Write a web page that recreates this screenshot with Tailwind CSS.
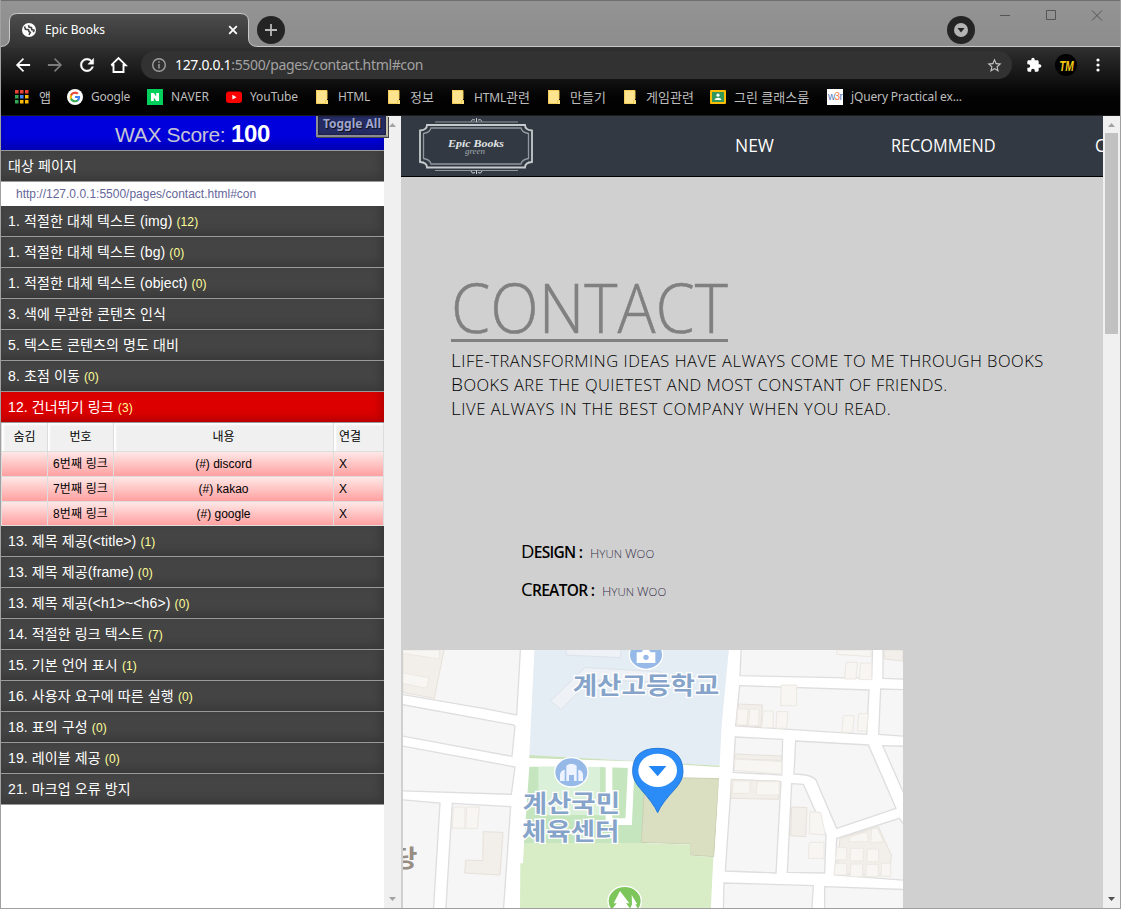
<!DOCTYPE html>
<html lang="ko">
<head>
<meta charset="utf-8">
<title>Epic Books</title>
<script src="https://cdn.jsdelivr.net/npm/@tailwindcss/browser@4"></script>
</head>
<body class="w-[1121px] h-[909px] overflow-hidden bg-[#a5a5a5] font-['Noto_Sans','Noto_Sans_CJK_KR',sans-serif]">
<svg class="hidden"><symbol id="folder" viewBox="0 0 12 14"><path d="M.5.500H11V10H12V14H.5Z" fill="#ffe490"/><path d="M0 .5H11V9M.5 0V13.500H9.500V10.500H12V13.500" fill="none" stroke="#f3cf57"/></symbol></svg>
<div class="relative flex flex-col w-[1121px] h-[909px] border-x border-[#a0a0a0] overflow-hidden">

  <!-- tab strip -->
  <header class="flex h-[47px] shrink-0 bg-linear-to-b from-[#949494] to-[#8c8c8c] border-t border-[#6e6e6e]">
    <div class="relative w-[257px] shrink-0">
      <svg class="absolute left-0 top-0" width="257" height="47" viewBox="0 1 257 47">
        <defs><linearGradient id="tab" x1="0" y1="0" x2="0" y2="1"><stop offset="0" stop-color="#4d4d4d"/><stop offset="1" stop-color="#323232"/></linearGradient></defs>
        <path d="M0 46.500 Q8.500 46 8.500 38 V21 Q8.500 13.500 16.500 13.500 H239 Q247.500 13.500 247.500 21 V38 Q247.500 46.500 257 46.500 V48 H0Z" fill="url(#tab)"/>
        <path d="M0 46.500 Q8.500 46 8.500 38 V21 Q8.500 13.500 16.500 13.500 H239 Q247.500 13.500 247.500 21 V38 Q247.500 46.500 257 46.500" fill="none" stroke="#c9c9c9"/>
      </svg>
      <div class="relative flex items-center h-[33px] mt-[12px] pl-[21px] pr-[20px]">
        <svg width="14" height="14" viewBox="0 0 14 14"><circle cx="7" cy="7" r="7" fill="#fff"/><path d="M2.500 3.500 3.500 6.200 6.500 6.800 7 8.500 8.300 9.500 7 11.800M6.500 2.200 7 4 9.500 4.600 9.700 6.600 12 7.200 11.300 9.200" fill="none" stroke="#444" stroke-width="1.600"/></svg>
        <span class="ml-[9px] text-[12px] leading-none text-white whitespace-nowrap tracking-[-.05px]">Epic Books</span>
        <svg class="ml-auto" width="10" height="10" viewBox="0 0 10 10"><path d="M1.200 1.200 8.800 8.800M8.800 1.200 1.200 8.800" stroke="#fff" stroke-width="1.800"/></svg>
      </div>
    </div>
    <div class="flex flex-1 border-b border-[#c9c9c9] pt-[15px] -ml-[1px]">
      <svg width="28" height="28" viewBox="0 0 28 28"><circle cx="14" cy="14" r="14" fill="#242424"/><path d="M8 14H20M14 8V20" stroke="#b9b9b9" stroke-width="1.800"/></svg>
      <svg class="ml-[662px]" width="28" height="28" viewBox="0 0 28 28"><circle cx="14" cy="14" r="14" fill="#242424"/><circle cx="14" cy="14" r="7" fill="#b4b4b4"/><path d="M10.500 12H17.500L14 16.500Z" fill="#222"/></svg>
      <svg class="ml-[24px] -mt-[8px]" width="106" height="14" viewBox="0 0 106 14" fill="none" stroke="#555"><path d="M1 7.500H11M47.500 2.500H56.500V11.500H47.500ZM93 2.500 103 12.500M103 2.500 93 12.500"/></svg>
    </div>
  </header>

  <!-- toolbar and bookmarks -->
  <div class="h-[69px] shrink-0 bg-linear-to-b from-[#303030] via-[#111] via-50% to-[#020202] to-80% border-b border-[#1c1c1c]">
    <div class="flex items-center h-[36px]">
      <svg class="ml-[12px]" width="20" height="20" viewBox="0 0 24 24" fill="#fff"><path d="M20.500 10.900H7.500l5.700-5.700L11.900 3.700 3.500 12l8.400 8.300 1.400-1.500-5.700-5.700H20.500z"/></svg>
      <svg class="ml-[12px]" width="20" height="20" viewBox="0 0 24 24" fill="#7b7b7b"><path d="M3.500 10.900H16.500L10.800 5.200 12.100 3.700 20.500 12l-8.400 8.300-1.400-1.500 5.700-5.700H3.500z"/></svg>
      <svg class="ml-[12px]" width="20" height="20" viewBox="0 0 24 24" fill="#fff" stroke="#fff" stroke-width=".5"><path d="M17.650 6.350C16.200 4.900 14.210 4 12 4c-4.420 0-7.990 3.580-7.990 8s3.570 8 7.990 8c3.730 0 6.840-2.550 7.730-6h-2.080c-.82 2.330-3.040 4-5.650 4-3.310 0-6-2.690-6-6s2.690-6 6-6c1.660 0 3.140.69 4.220 1.780L13 11h7V4l-2.350 2.350z"/></svg>
      <svg class="ml-[12px]" width="20" height="20" viewBox="0 0 20 20" fill="none" stroke="#fff" stroke-width="1.900"><path d="M4.500 9V17H14.500V9M2.300 10.200 9.500 3 16.700 10.200H14.500M2.300 10.200H4.500"/></svg>
      <div class="flex items-center w-[871px] h-[28px] ml-[12px] rounded-full bg-[#323232] pl-[11px] pr-[9px]">
        <svg width="14" height="14" viewBox="0 0 14 14" fill="none" stroke="#a0a0a0" stroke-width="1.400"><circle cx="7" cy="7" r="6.300"/><path d="M7 6V10.500M7 3.300V4.800"/></svg>
        <span class="ml-[9px] text-[14px] leading-none text-[#a2a2a2] whitespace-nowrap tracking-[-.34px]"><span class="text-white">127.0.0.1</span>:5500/pages/contact.html#con</span>
        <svg class="ml-auto" width="17" height="17" viewBox="0 0 24 24" fill="#c2c2c2"><path d="M22 9.240l-7.190-.62L12 2 9.190 8.630 2 9.240l5.460 4.730L5.820 21 12 17.270 18.180 21l-1.630-7.030L22 9.240zM12 15.400l-3.760 2.270 1-4.280-3.320-2.880 4.380-.38L12 6.100l1.710 4.040 4.380.38-3.320 2.880 1 4.280L12 15.400z"/></svg>
      </div>
      <svg class="ml-[14px]" width="16" height="16" viewBox="0 0 24 24" fill="#fff"><path d="M20.500 11H19V7c0-1.100-.9-2-2-2h-4V3.500C13 2.120 11.880 1 10.500 1S8 2.120 8 3.500V5H4c-1.100 0-1.990.9-1.990 2v3.800H3.500c1.490 0 2.700 1.210 2.700 2.700s-1.210 2.700-2.700 2.700H2V20c0 1.100.9 2 2 2h3.800v-1.500c0-1.490 1.210-2.700 2.700-2.700 1.490 0 2.700 1.210 2.700 2.700V22H17c1.100 0 2-.9 2-2v-4h1.500c1.380 0 2.500-1.120 2.500-2.500S21.880 11 20.500 11z"/></svg>
      <div class="flex items-center justify-center w-[22px] h-[22px] ml-[13px] rounded-full bg-black"><span class="text-[15px] leading-none font-bold italic tracking-[-.5px] text-[#f2c814] font-['Liberation_Sans'] scale-x-[.68]">TM</span></div>
      <svg class="ml-[19px]" width="4" height="14" viewBox="0 0 4 14" fill="#fff"><circle cx="2" cy="2" r="1.600"/><circle cx="2" cy="7" r="1.600"/><circle cx="2" cy="12" r="1.600"/></svg>
    </div>
    <nav class="flex items-center h-[28px] pl-[14px] text-[12px] leading-none text-[#bdbdbd] whitespace-nowrap">
      <div class="flex items-center w-[52px]"><svg width="14" height="14" viewBox="0 0 14 14"><path d="M0 0h3.500v3.500H0zM5 0h3.500v3.500H5zM10 0h3.500v3.500H10z" fill="#ea4335"/><path d="M0 5h3.500v3.500H0zM0 10h3.500v3.500H0z" fill="#34a853"/><path d="M5 5h3.500v3.500H5z" fill="#4285f4"/><path d="M10 5h3.500v3.500H10zM5 10h3.500v3.500H5zM10 10h3.500v3.500H10z" fill="#fbbc05"/></svg><span class="ml-[10px] text-[13px]">앱</span></div>
      <div class="flex items-center w-[80px]"><svg width="16" height="16" viewBox="-4.500 -4.500 33 33"><circle cx="12" cy="12" r="16.500" fill="#fff"/><path d="M22.560 12.250c0-.78-.07-1.530-.2-2.250H12v4.260h5.920c-.26 1.370-1.040 2.530-2.210 3.310v2.770h3.570c2.080-1.920 3.280-4.740 3.280-8.090z" fill="#4285f4"/><path d="M12 23c2.970 0 5.460-.98 7.280-2.660l-3.570-2.770c-.98.66-2.230 1.060-3.710 1.060-2.860 0-5.290-1.930-6.160-4.530H2.180v2.840C3.990 20.530 7.700 23 12 23z" fill="#34a853"/><path d="M5.840 14.090c-.22-.66-.35-1.360-.35-2.090s.13-1.430.35-2.090V7.070H2.180C1.430 8.550 1 10.220 1 12s.43 3.450 1.180 4.930l3.660-2.840z" fill="#fbbc05"/><path d="M12 5.380c1.620 0 3.060.56 4.210 1.640l3.150-3.150C17.450 2.090 14.970 1 12 1 7.700 1 3.990 3.470 2.180 7.070l3.660 2.840c.87-2.600 3.300-4.530 6.160-4.530z" fill="#ea4335"/></svg><span class="ml-[8px] tracking-[-.25px]">Google</span></div>
      <div class="flex items-center w-[79px]"><svg width="16" height="16" viewBox="0 0 16 16"><path d="M0 0H16V16H0Z" fill="#03cf5d"/><path d="M4 12V4H6.800L9.200 7.600V4H12V12H9.200L6.800 8.400V12Z" fill="#fff"/></svg><span class="ml-[8px] tracking-[.07px]">NAVER</span></div>
      <div class="flex items-center w-[90px]"><svg width="16" height="16" viewBox="0 0 16 16"><rect y="2.500" width="16" height="11.500" rx="3" fill="#f00"/><path d="M6.400 5.800 10.500 8.200 6.400 10.600Z" fill="#fff"/></svg><span class="ml-[8px] tracking-[-.07px]">YouTube</span></div>
      <div class="flex items-center w-[72px]"><svg width="12" height="14"><use href="#folder"/></svg><span class="ml-[10px] tracking-[-.19px]">HTML</span></div>
      <div class="flex items-center w-[64px]"><svg width="12" height="14"><use href="#folder"/></svg><span class="ml-[10px] text-[13px]">정보</span></div>
      <div class="flex items-center w-[96px]"><svg width="12" height="14"><use href="#folder"/></svg><span class="ml-[10px] tracking-[-.19px]">HTML<span class="text-[13px] tracking-normal">관련</span></span></div>
      <div class="flex items-center w-[76px]"><svg width="12" height="14"><use href="#folder"/></svg><span class="ml-[10px] text-[13px]">만들기</span></div>
      <div class="flex items-center w-[86px]"><svg width="12" height="14"><use href="#folder"/></svg><span class="ml-[10px] text-[13px]">게임관련</span></div>
      <div class="flex items-center w-[117px]"><svg width="16" height="14" viewBox="0 0 16 14"><rect width="16" height="14" rx="1" fill="#fbbc05"/><path d="M2 2H14V12H2Z" fill="#34985b"/><circle cx="8" cy="5.200" r="1.600" fill="#fff"/><path d="M4.500 10Q5 7.700 8 7.700T11.500 10Z" fill="#fff"/></svg><span class="ml-[8px] text-[13px]">그린 클래스룸</span></div>
      <div class="flex items-center"><span class="flex items-center justify-center w-4 h-4 bg-white text-[10px] tracking-[-.7px] text-[#4f79bd] font-['Liberation_Sans']">w<span class="text-[#f07a3c]">3</span>r</span><span class="ml-[8px] tracking-[-.14px]">jQuery Practical ex...</span></div>
    </nav>
  </div>

  <main class="relative flex h-[792px] shrink-0">
    <!-- accessibility report -->
    <aside class="w-[383px] h-full bg-white text-[14px] text-white font-['Liberation_Sans','Noto_Sans_CJK_KR',sans-serif] whitespace-nowrap [&>h2]:h-[31px] [&>h2]:overflow-hidden [&>h2]:pl-[7px] [&>h2]:border-b [&>h2]:border-[#999] [&>h2]:leading-[30px] [&>h2]:tracking-[.12px] [&>h2]:shadow-[inset_-4px_-4px_8px_rgba(0,0,0,.18)] [&_small]:text-[12px] [&_small]:text-[#ffff99]">
      <h1 class="h-[35px] overflow-hidden border-b border-[#999] bg-[#0000dc] shadow-[inset_0_-6px_10px_rgba(0,0,0,.2)] text-center text-[21px] leading-[36px] tracking-[-.32px] text-[#c4c4d4]">WAX Score: <b class="text-[24px] text-white">100</b></h1>
      <h2 class="bg-[#444]">대상 페이지</h2>
      <p class="h-[24px] pl-[15px] text-[12px] leading-[24px] text-[#666699]">http://127.0.0.1:5500/pages/contact.html#con</p>
      <h2 class="bg-[#444]">1. 적절한 대체 텍스트 (img) <small>(12)</small></h2>
      <h2 class="bg-[#444]">1. 적절한 대체 텍스트 (bg) <small>(0)</small></h2>
      <h2 class="bg-[#444]">1. 적절한 대체 텍스트 (object) <small>(0)</small></h2>
      <h2 class="bg-[#444]">3. 색에 무관한 콘텐츠 인식</h2>
      <h2 class="bg-[#444]">5. 텍스트 콘텐츠의 명도 대비</h2>
      <h2 class="bg-[#444]">8. 초점 이동 <small>(0)</small></h2>
      <h2 class="bg-[#dc0000]">12. 건너뛰기 링크 <small>(3)</small></h2>
      <div class="grid grid-cols-[47px_66px_220px_50px] grid-rows-[29px_25px_25px_24px] text-[12px] leading-none text-black [&>div]:flex [&>div]:items-center [&>div]:border-r [&>div]:border-b [&>div]:border-[#ddd]">
        <div class="justify-center bg-[#f0f0f0] shadow-[inset_2px_2px_2px_#fff] border-l">숨김</div>
        <div class="justify-center bg-[#f0f0f0] shadow-[inset_2px_2px_2px_#fff]">번호</div>
        <div class="justify-center bg-[#f0f0f0] shadow-[inset_2px_2px_2px_#fff]">내용</div>
        <div class="pl-[5px] bg-[#f0f0f0] shadow-[inset_2px_2px_2px_#fff]">연결</div>
        <div class="border-l bg-linear-to-b from-[#ffe8e8] to-[#ffa0a0]"></div>
        <div class="justify-center bg-linear-to-b from-[#ffe8e8] to-[#ffa0a0] tracking-[.14px]">6번째 링크</div>
        <div class="justify-center bg-linear-to-b from-[#ffe8e8] to-[#ffa0a0]">(#) discord</div>
        <div class="pl-[5px] bg-linear-to-b from-[#ffe8e8] to-[#ffa0a0]">X</div>
        <div class="border-l bg-linear-to-b from-[#ffe8e8] to-[#ffa0a0]"></div>
        <div class="justify-center bg-linear-to-b from-[#ffe8e8] to-[#ffa0a0] tracking-[.14px]">7번째 링크</div>
        <div class="justify-center bg-linear-to-b from-[#ffe8e8] to-[#ffa0a0]">(#) kakao</div>
        <div class="pl-[5px] bg-linear-to-b from-[#ffe8e8] to-[#ffa0a0]">X</div>
        <div class="border-l bg-linear-to-b from-[#ffe8e8] to-[#ffa0a0]"></div>
        <div class="justify-center bg-linear-to-b from-[#ffe8e8] to-[#ffa0a0] tracking-[.14px]">8번째 링크</div>
        <div class="justify-center bg-linear-to-b from-[#ffe8e8] to-[#ffa0a0]">(#) google</div>
        <div class="pl-[5px] bg-linear-to-b from-[#ffe8e8] to-[#ffa0a0]">X</div>
      </div>
      <h2 class="bg-[#444]">13. 제목 제공(&lt;title&gt;) <small>(1)</small></h2>
      <h2 class="bg-[#444]">13. 제목 제공(frame) <small>(0)</small></h2>
      <h2 class="bg-[#444]">13. 제목 제공(&lt;h1&gt;~&lt;h6&gt;) <small>(0)</small></h2>
      <h2 class="bg-[#444]">14. 적절한 링크 텍스트 <small>(7)</small></h2>
      <h2 class="bg-[#444]">15. 기본 언어 표시 <small>(1)</small></h2>
      <h2 class="bg-[#444]">16. 사용자 요구에 따른 실행 <small>(0)</small></h2>
      <h2 class="bg-[#444]">18. 표의 구성 <small>(0)</small></h2>
      <h2 class="bg-[#444]">19. 레이블 제공 <small>(0)</small></h2>
      <h2 class="bg-[#444]">21. 마크업 오류 방지</h2>
    </aside>
    <div class="flex flex-col items-center justify-between w-[17px] h-full py-[7px] bg-[#f0f0f0]">
      <svg width="7" height="4" viewBox="0 0 7 4" fill="#a3a3a3"><path d="M0 4H7L3.500 0Z"/></svg>
      <svg width="7" height="4" viewBox="0 0 7 4" fill="#a3a3a3"><path d="M0 0H7L3.500 4Z"/></svg>
    </div>
    <button class="absolute left-[315px] top-0 w-[72px] h-[21px] border-2 border-t-0 border-[#8c8c94] border-r-[#c1beaa] bg-[#252c63] shadow-[inset_0_0_2px_#111,1px_1px_0_#444] text-[12px] font-bold leading-none text-[#9fa6d0] [text-shadow:1px_1px_0_#111] pb-[3px]">Toggle All</button>

    <!-- Epic Books page -->
    <section class="w-[702px] h-full overflow-hidden bg-[#d0d0d0] text-[#111] font-['Open_Sans','Noto_Sans',sans-serif]">
      <div class="flex h-[61px] bg-[#323942] border-b border-black text-white text-[18px] leading-none whitespace-nowrap">
        <svg class="ml-[17px] mt-[1px] shrink-0" width="118" height="60" viewBox="0 0 118 60" fill="none" stroke="#c8cbce">
          <path d="M17 5H100M17 53.500H100" stroke="#92989e" stroke-width="1.200"/>
          <path d="M53 4.500Q54 1.500 57 3M64 4.500Q63 1.500 60 3M58.500 1V5M53 54Q54 57.500 57 55.500M64 54Q63 57.500 60 55.500M58.500 53V57"/>
          <path d="M9 8H107Q107 13 114 13.500V45Q107 45.500 107 50.500H9Q9 45.500 2 45V13.500Q9 13 9 8Z" stroke-width="1.800"/>
          <path d="M13 11H103Q104 15.500 110.500 16.500V41.500Q104 42.500 103 47H13Q12 42.500 5.500 41.500V16.500Q12 15.500 13 11Z" stroke="#92989e" stroke-width="1.300"/>
          <text x="30" y="29.500" textLength="56" lengthAdjust="spacingAndGlyphs" fill="#e2e4e6" stroke="none" font-family="Liberation Serif" font-style="italic" font-weight="700" font-size="9.500">Epic Books</text>
          <text x="47" y="37" textLength="20" lengthAdjust="spacingAndGlyphs" fill="#a5aaaf" stroke="none" font-family="Liberation Serif" font-style="italic" font-size="7.500">green</text>
        </svg>
        <span class="self-center w-[39px] ml-[199px] -mt-px pb-px shrink-0 origin-left scale-x-[.97]">NEW</span>
        <span class="self-center w-[104px] ml-[117px] -mt-px pb-px shrink-0 origin-left scale-x-[.905]">RECOMMEND</span>
        <span class="self-center ml-[100px] -mt-px pb-px shrink-0 origin-left scale-x-[.91]">CONTACT</span>
      </div>
      <div class="pl-[50px]">
        <h2 class="w-[277px] h-[165px] pt-[96px] border-b-3 border-[#808080] text-[68px] leading-[68px] font-light text-[#808080] whitespace-nowrap [-webkit-text-stroke:.5px_#808080]"><span class="inline-block origin-left scale-x-[.931]">CONTACT</span></h2>
        <div class="flex flex-col pt-[6px] text-[16.5px] leading-[24px] font-light text-black uppercase whitespace-nowrap [&>p]:h-[24px] [&>p]:first-letter:text-[19px]">
          <p class="tracking-[.52px]">Life-transforming ideas have always come to me through books</p>
          <p class="tracking-[.49px]">Books are the quietest and most constant of friends.</p>
          <p class="tracking-[.6px]">Live always in the best company when you read.</p>
        </div>
        <div class="flex flex-col gap-[14px] pt-[119px] pl-[70px] text-[15.5px] leading-[24px] text-black uppercase whitespace-nowrap">
          <p class="flex items-baseline h-[24px]"><span class="block w-[69px] font-semibold tracking-[-.7px] first-letter:text-[18.5px] first-letter:font-medium">Design :</span><span class="text-[11.500px] font-light text-[#38304c]"><span class="text-[13px]">H</span>yun <span class="text-[13px]">W</span>oo</span></p>
          <p class="flex items-baseline h-[24px]"><span class="block w-[81px] font-semibold tracking-[-.7px] first-letter:text-[18.5px] first-letter:font-medium">Creator :</span><span class="text-[11.500px] font-light text-[#38304c]"><span class="text-[13px]">H</span>yun <span class="text-[13px]">W</span>oo</span></p>
        </div>
      </div>
      <!-- neighbourhood map -->
      <svg class="ml-[2px] mt-[49px]" width="500" height="258" viewBox="9 15 1500 774" preserveAspectRatio="none" font-family="Noto Sans CJK KR" font-weight="700">
        <path d="M0 0H1520V800H0Z" fill="#fff"/>
        <g fill="#f6f6f6" stroke="#dedede" stroke-width="4">
          <path d="M-9 0H362L350 210 250 190-9 146Z"/><path d="M-9 176 340 240 345 243 336 334-9 270Z"/><path d="M-9 300 345 366 334 448-9 437Z"/>
          <path d="M-9 463 120 474 100 800H-9Z"/><path d="M157 475 332 485 310 800H137Z"/>
          <path d="M1024 0H1418L1415 100 1020 92Z"/><path d="M1449 0H1520V103L1449 100Z"/><path d="M1019 122 1407 135 1400 268 1007 243Z"/><path d="M1442 132 1520 134V274L1436 268Z"/>
          <path d="M1006 276 1148 283 1145 390 1000 382Z"/><path d="M1187 288 1405 300 1488 490 1310 550 1248 405Q1235 388 1182 387Z"/><path d="M1448 302 1520 304V465Z"/>
          <path d="M995 403 1143 410 1128 684 976 678Z"/><path d="M1175 416 1210 418 1278 570 1274 684 1162 682Z"/><path d="M1310 580 1498 520 1520 550V706L1305 690Z"/>
          <path d="M972 714 1240 722 1235 800H970Z"/><path d="M1274 725 1520 734V800H1274Z"/>
        </g>
        <path d="M404 0H990L960 362 680 347 388 330Z" fill="#e4ecf4"/>
        <path d="M388 330 690 347 960 362V374L690 350 388 342Z" fill="#cbe2bd"/>
        <path d="M388 365H735V595H372Z" fill="#c5e5bf"/><path d="M415 365H600V510H415Z" fill="#dbf0d9"/>
        <path d="M735 396 957 401 941 635 870 630 872 597 724 592Z" fill="#d9dfc0" stroke="#cbd0b4" stroke-width="3"/>
        <path d="M372 594H724L872 599 870 632 940 636 932 800H360L361 655H369Z" fill="#d8ecc6"/>
        <path d="M378 349 690 359 965 377M627 365V530H686L694 360" fill="none" stroke="#fff" stroke-width="20"/>
        <path d="M965 240 988 0H1008L985 400 962 790H935L957 400Z" fill="#fff"/>
        <path d="M500 0H662V38L498 30ZM452 167 555 68 780 80 770 110 570 105 483 194Z" fill="#eef2f6" stroke="#dde3ea" stroke-width="3"/>
        <g fill="#f2eeea" stroke="#e7e1da" stroke-width="3">
          <path d="M9 10H133L103 160 9 142ZM250 560 309 562 300 690 194 684 197 645 248 647ZM1015 177 1087 180 1083 245 1010 240ZM1005 327 1145 333V346L1005 342ZM993 404 1137 408 1135 463 993 460ZM1175 486 1221 488 1217 575 1172 572ZM1320 580 1435 545 1474 630 1469 692 1310 686ZM1452 15H1509V48L1454 42Z"/>
        </g>
        <g fill="#f8f6f2" stroke="#ece8e2" stroke-width="3">
          <path d="M9 84 88 98 80 130 9 115ZM9 15H118V42L9 25ZM160 486H195V550H157ZM200 486H238L232 550H197ZM1144 120H1190V182H1142ZM1012 192H1045L1040 240H1010ZM1050 192H1078L1075 242H1045ZM1090 198H1120V248H1085ZM1130 200H1164L1160 250H1128ZM1330 212H1362L1358 262H1325ZM1376 206H1405L1400 258H1372ZM1338 52H1372L1368 102H1334ZM1382 54H1415V104H1378ZM1005 342 1145 350V387L1003 376ZM1000 408H1050V445H997ZM1072 410H1138V450H1068ZM1230 500 1262 502 1276 570 1228 566ZM1228 592H1272V640H1225ZM1350 575 1400 560 1406 590H1346ZM1415 552 1432 548 1450 590 1412 594ZM1310 608H1340V645H1306ZM1352 610H1390V648H1350ZM1402 612H1436V650H1400ZM1306 655H1340V690H1302ZM1352 657H1388V695H1350ZM1400 658H1435V695H1396ZM1445 655H1472V694H1443ZM1310 15H1413V35L1310 28Z"/>
        </g>
        <g fill="#96b9e8" stroke="#fff" stroke-width="4"><ellipse cx="738" cy="29" rx="50" ry="44"/><ellipse cx="514" cy="382" rx="50" ry="44"/></g>
        <path d="M710 22H724L732 12H745L752 22H766V54H710Z" fill="#fff"/><circle cx="738" cy="37" r="8" fill="#96b9e8"/>
        <path d="M480 408V388Q482 376 494 374V408ZM499 408V362Q514 350 530 362V408ZM535 408V374Q547 376 549 388V408Z" fill="#edf4ff"/><path d="M507 390H522V408H507Z" fill="#96b9e8"/>
        <g fill="#86a4ca" stroke="#fff" stroke-width="8" paint-order="stroke" font-size="72">
          <text x="518" y="148" textLength="440" lengthAdjust="spacingAndGlyphs">계산고등학교</text><text x="368" y="500" textLength="292" lengthAdjust="spacingAndGlyphs">계산국민</text><text x="366" y="586" textLength="292" lengthAdjust="spacingAndGlyphs">체육센터</text>
        </g>
        <text x="-22" y="665" font-size="72" textLength="74" lengthAdjust="spacingAndGlyphs" fill="#988d82">당</text>
        <ellipse cx="674" cy="768" rx="50" ry="44" fill="#7cc65b" stroke="#fff" stroke-width="4"/><path d="M660 738 688 775H678L690 790H638L650 775H641ZM695 750 712 778H706L714 792H690L696 778Z" fill="#fff"/>
        <path d="M773 503Q760 474 720 430 698 405 698 380 698 310 773 310T849 380Q849 405 827 430 785 474 773 503Z" fill="#2c8cf7" stroke="#2478d8" stroke-width="3"/><ellipse cx="773" cy="376" rx="58" ry="50" fill="#fff"/><path d="M746 363H799L773 394Z" fill="#2386f5"/>
      </svg>
    </section>
    <div class="flex flex-col items-center w-[17px] h-full py-[7px] bg-[#f0f0f0]">
      <svg class="shrink-0" width="7" height="4" viewBox="0 0 7 4" fill="#a3a3a3"><path d="M0 4H7L3.500 0Z"/></svg>
      <div class="w-[13px] h-[201px] mt-[6px] bg-[#c1c1c1]"></div>
      <svg class="mt-auto shrink-0" width="7" height="4" viewBox="0 0 7 4" fill="#505050"><path d="M0 0H7L3.500 4Z"/></svg>
    </div>
  </main>
  <div class="h-px bg-[#a0a0a0]"></div>
</div>
</body>
</html>
